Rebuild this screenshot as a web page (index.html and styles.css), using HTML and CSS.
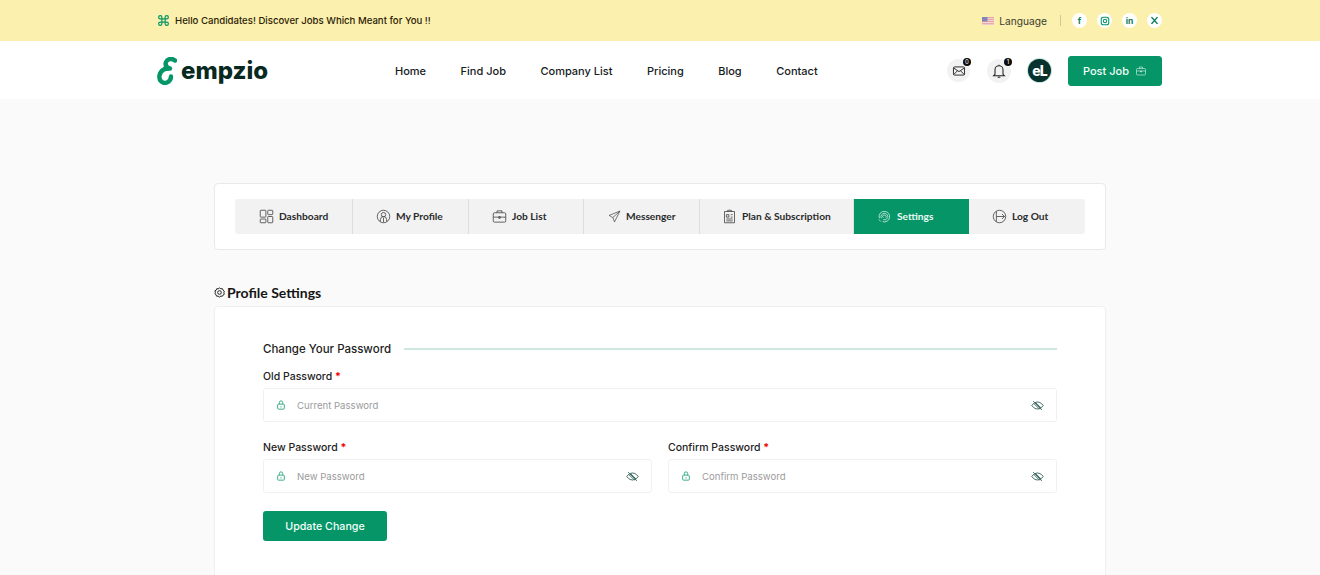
FILE: index.html
```html
<!DOCTYPE html>
<html lang="en">
<head>
<meta charset="utf-8">
<title>Empzio - Profile Settings</title>
<link rel="stylesheet" href="styles.css">
</head>
<body>
<div class="topbar">
  <div class="wrap topbar-in">
    <div class="hello">
      <svg class="hello-ico" viewBox="0 0 24 24" width="13" height="13"><path d="M9 9h6v6H9zM9 9V6a3 3 0 1 0-3 3h3zM15 9h3a3 3 0 1 0-3-3v3zM15 15v3a3 3 0 1 0 3-3h-3zM9 15H6a3 3 0 1 0 3 3v-3z"/></svg>
      <span>Hello Candidates! Discover Jobs Which Meant for You !!</span>
    </div>
    <div class="top-right">
      <svg class="flag" viewBox="0 0 12 8" width="12" height="8"><rect width="12" height="8" fill="#e8a0a0"/><path d="M0 1.500h12M0 3.500h12M0 5.500h12M0 7.300h12" stroke="#f3e4e4" stroke-width=".8"/><rect width="5.500" height="4.400" fill="#7f86b8"/></svg>
      <span class="lang">Language</span>
      <span class="sep"></span>
      <div class="socials">
        <span class="soc">f</span>
        <span class="soc"><svg viewBox="0 0 24 24" width="10" height="10"><rect x="3" y="3" width="18" height="18" rx="5" class="ig"/><circle cx="12" cy="12" r="4" class="ig"/><circle cx="17" cy="7" r="1" fill="#069567"/></svg></span>
        <span class="soc">in</span>
        <span class="soc"><svg viewBox="0 0 24 24" width="9" height="9" class="xico"><path d="M4 3l16 18M20 3L4 21"/></svg></span>
      </div>
    </div>
  </div>
</div>
<header class="header">
  <div class="wrap header-in">
    <div class="logo">
      <svg class="logo-mark" viewBox="0 0 20 28" width="20" height="28" aria-label="Empzio logo"><path d="M18 3.500C15 1 10.500 1.500 9 5c-1 2.500.5 5 3 6.500-4-.5-8.500 2-9.500 7C1.500 24 6 27 10 25.500c3-1.200 4-4 4-6"/><path d="M8 11.500h5"/></svg>
      <span class="logo-t">empzio</span>
    </div>
    <nav class="nav">
      <a>Home</a><a>Find Job</a><a>Company List</a><a>Pricing</a><a>Blog</a><a>Contact</a>
    </nav>
    <div class="actions">
      <span class="round">
        <svg viewBox="0 0 24 24" width="14" height="14" class="line strong"><rect x="2.500" y="5" width="19" height="14" rx="2"/><path d="M3 7l9 6 9-6M3 18l6-6M21 18l-6-6"/></svg>
        <span class="badge">0</span>
      </span>
      <span class="round bell">
        <svg viewBox="0 0 24 24" width="16" height="16" class="line strong"><path d="M6 17V10a6 6 0 0 1 12 0v7l2 2H4zM10 21.500h4M12 4V2.500"/></svg>
        <span class="badge">1</span>
      </span>
      <span class="avatar">eL</span>
      <button class="post">Post Job
        <svg viewBox="0 0 24 24" width="12" height="12" class="line light"><rect x="3" y="7" width="18" height="13" rx="2"/><path d="M9 7V4h6v3M3 12h18M11 12h2v2h-2z"/></svg>
      </button>
    </div>
  </div>
</header>
<main class="main">
  <div class="tabs-card">
    <div class="tabs">
      <a class="tab w1"><svg viewBox="0 0 24 24" width="15" height="15" class="line"><rect x="2" y="2" width="9" height="11" rx="1"/><rect x="14" y="2" width="8" height="7" rx="1"/><rect x="2" y="16" width="9" height="6" rx="1"/><rect x="14" y="12" width="8" height="10" rx="1"/></svg>Dashboard</a>
      <a class="tab w2"><svg viewBox="0 0 24 24" width="15" height="15" class="line"><circle cx="12" cy="12" r="10"/><circle cx="12" cy="9" r="3.500"/><path d="M7 20v-3a5 5 0 0 1 10 0v3M12 14v7"/></svg>My Profile</a>
      <a class="tab w3"><svg viewBox="0 0 24 24" width="15" height="15" class="line"><rect x="2" y="6" width="20" height="15" rx="2"/><path d="M8 6V3h8v3M2 13h20M11 12h2v3h-2z"/></svg>Job List</a>
      <a class="tab w4"><svg viewBox="0 0 24 24" width="13" height="13" class="line"><path d="M22 2L2 10l7 4 3 8zM22 2L9 14"/></svg>Messenger</a>
      <a class="tab w5"><svg viewBox="0 0 24 24" width="15" height="15" class="line"><path d="M4 4h16v18H4zM9 4V2h6v2M7 9h4v4H7zM14 9h3M14 13h3M7 16h10M7 19h10"/></svg>Plan &amp; Subscription</a>
      <a class="tab w6 active"><svg viewBox="0 0 24 24" width="15" height="15" class="line light"><path d="M4 15a8 8 0 0 1 9-11 8 8 0 0 1 7 10 8 8 0 0 1-11 6M7 15a5.500 5.500 0 0 1 6-8 5.500 5.500 0 0 1 4 7 5.500 5.500 0 0 1-7 3M10 14a2.500 2.500 0 0 1 3-4 2.500 2.500 0 0 1 1 4M3 17l3 3"/></svg>Settings</a>
      <a class="tab w7"><svg viewBox="0 0 24 24" width="15" height="15" class="line"><circle cx="12" cy="12" r="10"/><path d="M7 4v16M7 12h13M16 8l4 4-4 4"/></svg>Log Out</a>
    </div>
  </div>
  <h2 class="page-title"><svg viewBox="0 0 24 24" width="11" height="11" class="line dark"><path d="M12 2l3 2 3.500-.3 1.300 3.300 2.700 2.200-1 3.300 1 3.300-2.700 1.500L18.500 20 15 20l-3 2-3-2-3.500 0-1.300-3.700L2 14.800l1-3.300-1-3.300L4.700 7 6 3.700 9 4z"/><circle cx="12" cy="12" r="4"/></svg>Profile Settings</h2>
  <section class="form-card">
    <div class="sec-head"><span>Change Your Password</span><i></i></div>
    <div class="field">
      <label>Old Password <b>*</b></label>
      <div class="input"><svg viewBox="0 0 24 24" width="10" height="10" class="lock"><rect x="4" y="10" width="16" height="12" rx="2"/><path d="M8 10V6a4 4 0 0 1 8 0v4M12 15v3"/></svg><span>Current Password</span><svg viewBox="0 0 24 24" width="13" height="13" class="eye"><path d="M1.500 12S5.500 5.500 12 5.500 22.500 12 22.500 12 18.500 18.500 12 18.500 1.500 12 1.500 12zM4 4l16 16M8 6l11 11M5 8l11 11"/></svg></div>
    </div>
    <div class="two">
      <div class="field">
        <label>New Password <b>*</b></label>
        <div class="input"><svg viewBox="0 0 24 24" width="10" height="10" class="lock"><rect x="4" y="10" width="16" height="12" rx="2"/><path d="M8 10V6a4 4 0 0 1 8 0v4M12 15v3"/></svg><span>New Password</span><svg viewBox="0 0 24 24" width="13" height="13" class="eye"><path d="M1.500 12S5.500 5.500 12 5.500 22.500 12 22.500 12 18.500 18.500 12 18.500 1.500 12 1.500 12zM4 4l16 16M8 6l11 11M5 8l11 11"/></svg></div>
      </div>
      <div class="field">
        <label>Confirm Password <b>*</b></label>
        <div class="input"><svg viewBox="0 0 24 24" width="10" height="10" class="lock"><rect x="4" y="10" width="16" height="12" rx="2"/><path d="M8 10V6a4 4 0 0 1 8 0v4M12 15v3"/></svg><span>Confirm Password</span><svg viewBox="0 0 24 24" width="13" height="13" class="eye"><path d="M1.500 12S5.500 5.500 12 5.500 22.500 12 22.500 12 18.500 18.500 12 18.500 1.500 12 1.500 12zM4 4l16 16M8 6l11 11M5 8l11 11"/></svg></div>
      </div>
    </div>
    <button class="update">Update Change</button>
  </section>
</main>
</body>
</html>
```
FILE: styles.css
```css
* { box-sizing: border-box; }
html, body { margin: 0; height: 575px; overflow: hidden; }
body { background: #fafafa; font-family: Inter, "Liberation Sans", sans-serif; color: #111; }
.wrap { width: 1005px; margin-left: 157px; }
.topbar { height: 41px; background: #fbf0ad; }
.topbar-in { height: 41px; display: flex; align-items: center; justify-content: space-between; }
.hello { display: flex; align-items: center; gap: 5px; font-size: 9.600px; font-weight: 500; color: #2b2106; }
.hello-ico { fill: none; stroke: #069567; stroke-width: 2.200; }
.top-right { display: flex; align-items: center; }
.flag { margin-right: 5px; }
.lang { font-size: 10.200px; color: #3a3a30; margin-right: 13px; }
.sep { width: 1px; height: 11px; background: #cfc795; margin-right: 11px; }
.socials { display: flex; gap: 10px; }
.soc { width: 15px; height: 15px; border-radius: 50%; background: #fff; color: #0b7d5c; font-size: 8.500px; font-weight: 700; display: flex; align-items: center; justify-content: center; }
.ig { fill: none; stroke: #069567; stroke-width: 2.500; }
.xico { fill: none; stroke: #0b7d5c; stroke-width: 4; }
.header { height: 58px; background: #fff; }
.header-in { height: 58px; padding-top: 1px; display: flex; align-items: center; }
.logo { display: flex; align-items: center; gap: 4px; width: 238px; }
.logo-mark { fill: none; stroke: #069567; stroke-width: 4.400; stroke-linecap: round; flex: none; }
.logo-t { font-weight: 800; font-size: 24px; line-height: 28px; color: #08291f; }
.nav { display: flex; gap: 34.500px; font-size: 11px; font-weight: 500; color: #15201c; }
.actions { margin-left: auto; display: flex; align-items: center; }
.round { width: 23px; height: 23px; border-radius: 50%; background: #f1f2f1; display: flex; align-items: center; justify-content: center; position: relative; margin-right: 17px; }
.bell { width: 24px; height: 24px; }
.badge { position: absolute; top: -1px; right: -1px; width: 8px; height: 8px; border-radius: 50%; background: #0c0c0c; color: #fff; font-size: 6px; line-height: 8px; text-align: center; }
.line { fill: none; stroke: #444; stroke-width: 1.300; flex: none; }
.line.strong { stroke: #222; stroke-width: 1.600; }
.line.light { stroke: #cfeee2; }
.line.dark { stroke: #111; stroke-width: 2; }
.avatar { width: 23px; height: 23px; border-radius: 50%; background: #08322e; color: #fff; font-size: 14px; font-weight: 800; display: flex; align-items: center; justify-content: center; margin-right: 17px; letter-spacing: -1px; box-shadow: 0 0 0 1px #bfe6d8; }
.post { width: 94px; height: 30px; background: #069567; border: 1px solid #069567; border-radius: 3px; color: #f2fff9; font: 500 11px Inter, sans-serif; display: flex; align-items: center; justify-content: center; gap: 6px; padding: 0; }
.main { width: 892px; margin: 84px 0 0 214px; }
.tabs-card { height: 67px; background: #fff; border: 1px solid #e8e9e8; border-radius: 4px; padding: 15px 20px; }
.tabs { display: flex; height: 35px; width: 850px; background: #f2f2f2; border-radius: 3px; overflow: hidden; }
.tab { display: flex; align-items: center; gap: 5px; padding: 0 0 1px 24px; font-family: Lato, sans-serif; font-weight: 700; font-size: 10.200px; color: #2a2a2a; border-right: 1px solid #dededd; }
.w1 { width: 118px; }
.w2 { width: 116px; padding-left: 23px; }
.w3 { width: 115px; padding-left: 23px; }
.w4 { width: 116px; padding-left: 24px; }
.w5 { width: 154px; padding-left: 22px; }
.w6 { width: 115px; padding-left: 23px; }
.w7 { width: 116px; padding-left: 23px; border-right: 0; }
.active { background: #069567; color: #e9fbf4; border-right: 0; }
.page-title { margin: 33px 0 4px; height: 19px; display: flex; align-items: center; gap: 2px; font-family: Lato, sans-serif; font-size: 14px; font-weight: 700; line-height: 19px; color: #151515; }
.form-card { height: 280px; background: #fff; border: 1px solid #eef0ef; border-radius: 4px; padding: 33px 48px 0; }
.sec-head { display: flex; align-items: center; gap: 13px; font-size: 11.500px; font-weight: 500; color: #222; height: 17px; margin-bottom: 13px; }
.sec-head i { flex: 1; height: 2px; background: #cfe8df; }
.field label { display: block; font-size: 10.500px; font-weight: 500; color: #232323; height: 14px; line-height: 14px; margin-bottom: 4px; }
.field b { color: #f00000; }
.input { height: 34px; border: 1px solid #eef3f1; border-radius: 3px; background: #fff; display: flex; align-items: center; padding: 0 12px; font-size: 9.600px; color: #9b9b9b; margin-bottom: 18px; }
.input span { flex: 1; margin-left: 11px; }
.lock { fill: none; stroke: #2fa77f; stroke-width: 2.200; }
.eye { fill: none; stroke: #3d6a62; stroke-width: 1.800; }
.two { display: grid; grid-template-columns: 389px 389px; column-gap: 16px; margin-top: 19px; }
.two .input { margin-bottom: 18px; }
.form-card > .field .input { margin-bottom: 0; }
.update { width: 124px; height: 30px; background: #069567; border: 0; border-radius: 3px; color: #f2fff9; font: 500 10.700px Inter, sans-serif; padding: 0; display: block; }
```
